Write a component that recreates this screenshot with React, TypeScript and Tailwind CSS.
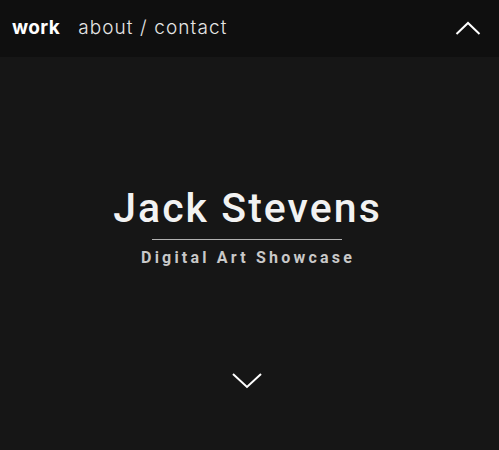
import React from "react";

export default function App() {
  return (
    <div className="w-[499px] h-[450px] bg-[#161616] flex flex-col overflow-hidden">
      <header className="h-[57px] bg-[#0f0f0f] flex items-center justify-between pl-[12px] pr-[18px] shrink-0" style={{ fontFamily: "Inter, sans-serif" }}>
        <nav className="flex items-center text-[19px] text-white">
          <span className="font-bold tracking-[0.02em]">work</span>
          <span className="ml-[18px] font-light text-[#e6e6e6] tracking-[0.058em]">about / contact</span>
        </nav>
        <svg width="26" height="16" viewBox="0 0 26 16" fill="none" stroke="white" strokeWidth="2">
          <path d="M1.5 13 L13 2 L24.5 13" />
        </svg>
      </header>
      <main className="flex-1 flex flex-col items-center pr-[6px]" style={{ fontFamily: "Roboto, sans-serif" }}>
        <h1 className="mt-[127px] text-[41px] leading-[48px] font-medium text-[#f2f2f2] tracking-[0.05em] pl-[2px]">Jack Stevens</h1>
        <div className="mt-[7px] w-[190px] h-px bg-[#b0b0b0]" />
        <p className="mt-[8px] text-[16px] leading-[20px] font-bold text-[#c8c8c8] tracking-[0.2em] pl-[3px]">Digital Art Showcase</p>
        <svg className="mt-[103px]" width="32" height="19" viewBox="0 0 32 19" fill="none" stroke="white" strokeWidth="2">
          <path d="M2 3 L16 16 L30 3" />
        </svg>
      </main>
    </div>
  );
}
